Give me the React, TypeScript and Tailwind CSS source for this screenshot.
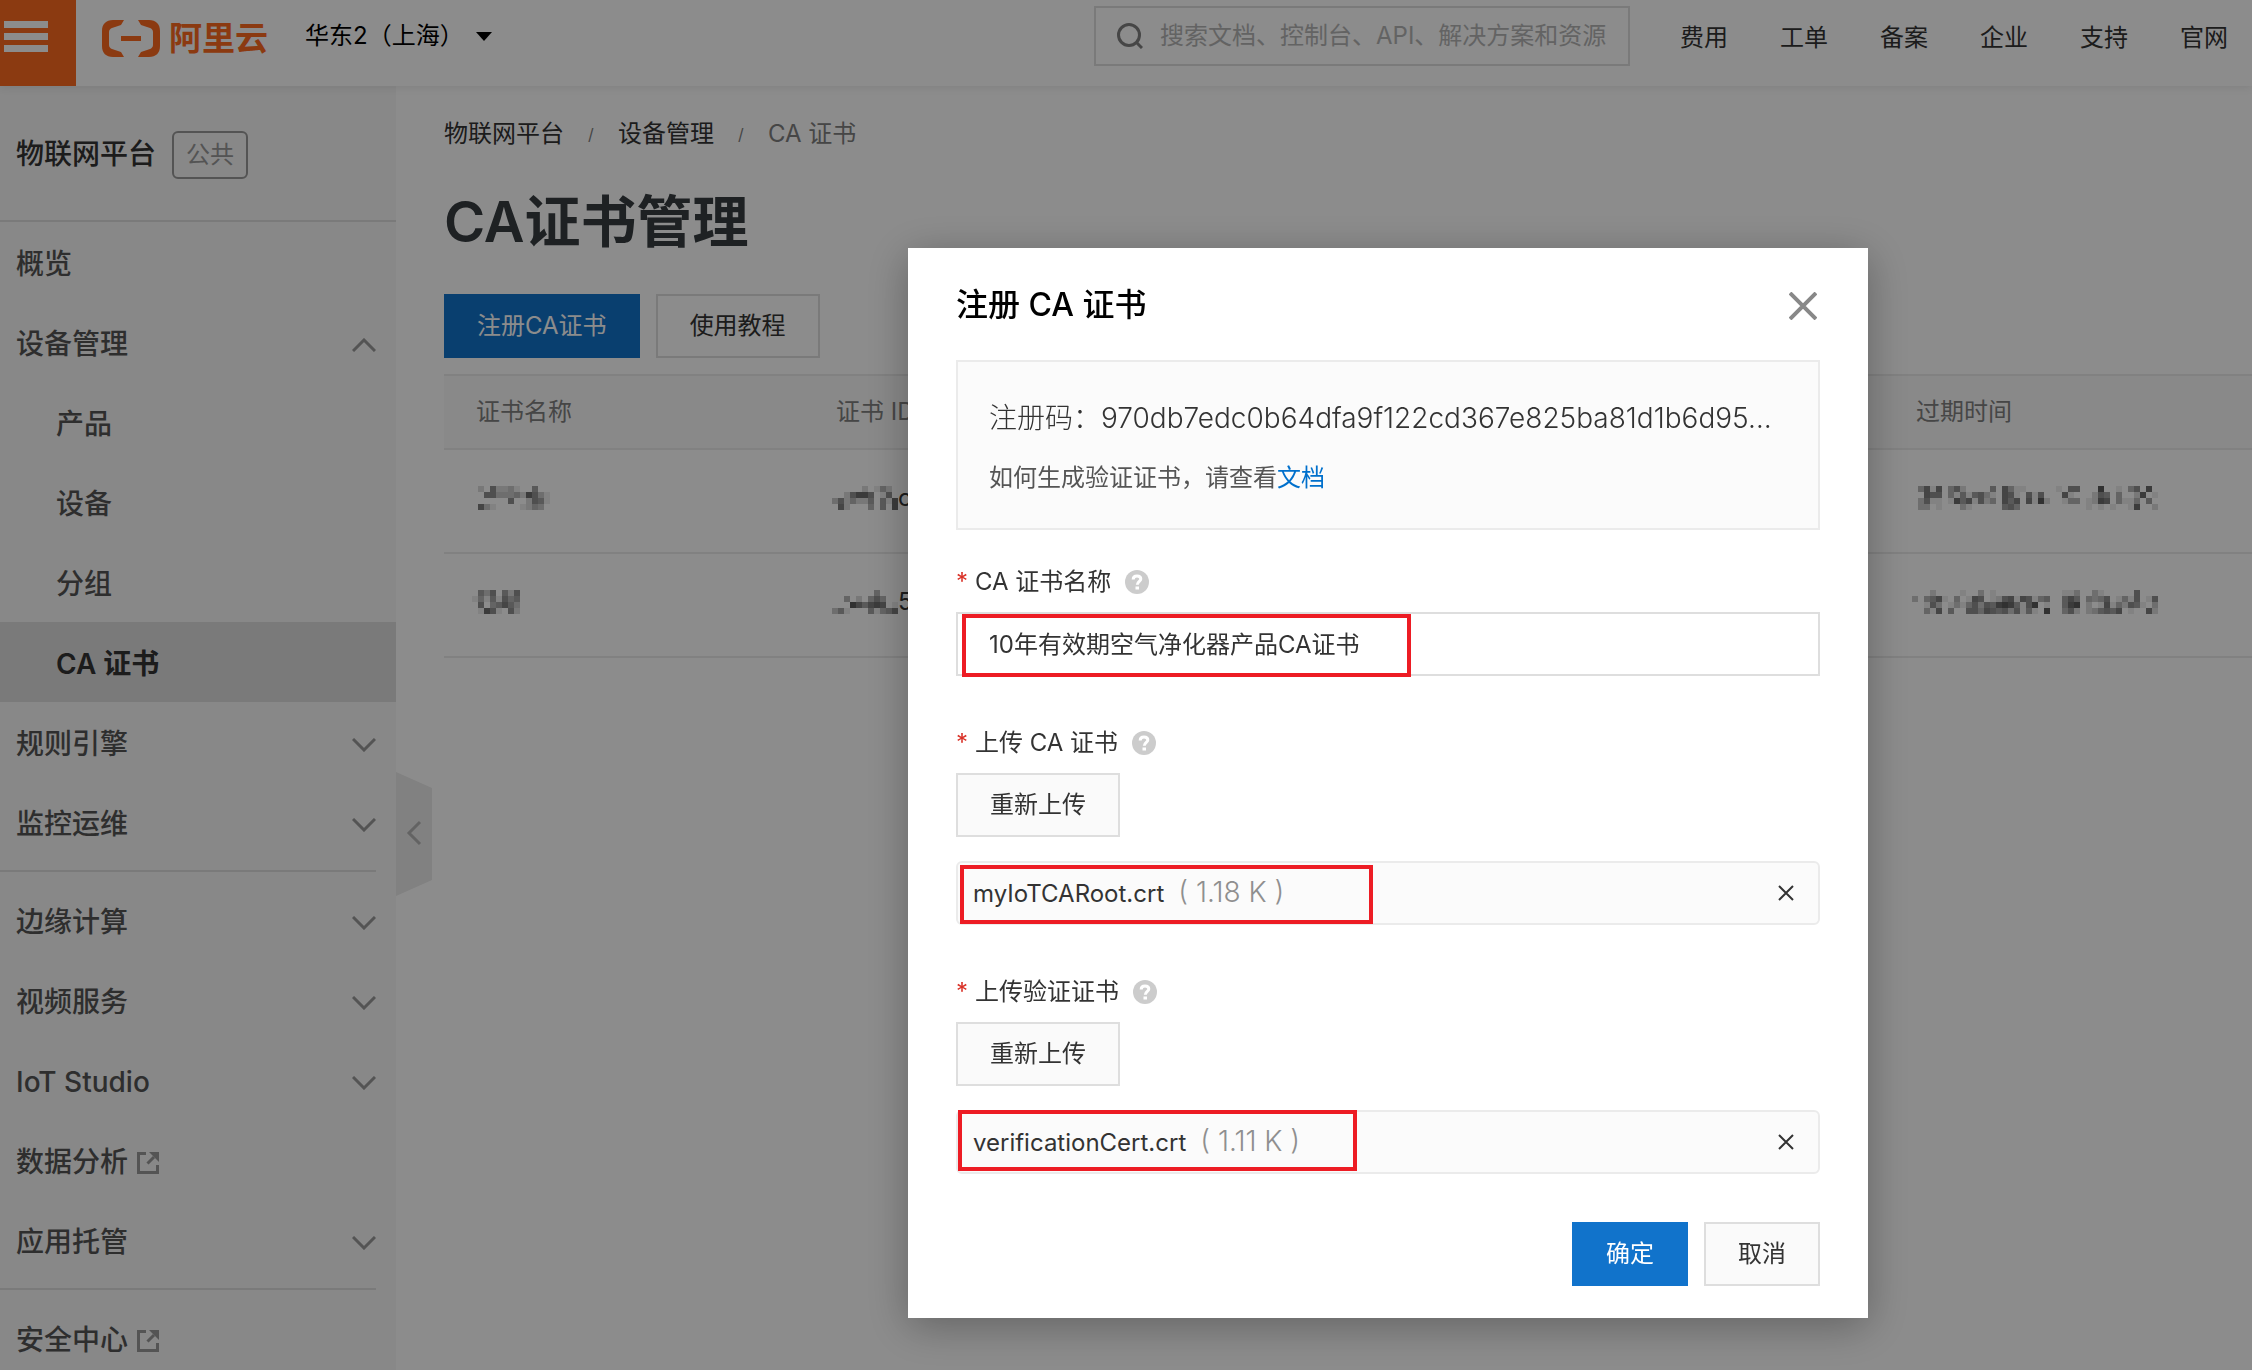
import { useState } from "react";

type NavItem = {
  label: string;
  icon?: "up" | "down" | "external";
  sub?: boolean;
  active?: boolean;
};

const navGroups: NavItem[][] = [
  [
    { label: "概览" },
    { label: "设备管理", icon: "up" },
    { label: "产品", sub: true },
    { label: "设备", sub: true },
    { label: "分组", sub: true },
    { label: "CA 证书", sub: true, active: true },
    { label: "规则引擎", icon: "down" },
    { label: "监控运维", icon: "down" },
  ],
  [
    { label: "边缘计算", icon: "down" },
    { label: "视频服务", icon: "down" },
    { label: "IoT Studio", icon: "down" },
    { label: "数据分析", icon: "external" },
    { label: "应用托管", icon: "down" },
  ],
  [{ label: "安全中心", icon: "external" }],
];

const topLinks = ["费用", "工单", "备案", "企业", "支持", "官网"];

// masked values, one digit per block: 0 is empty, 9 is darkest
const certs = [
  {
    name: ["0206223100500", "0066333428631", "0000006002651", "0731000012430"],
    id: ["00000201420", "00268860160", "36242250518", "07200040508"],
    idTail: "c",
    expires: [
      "04717046200005074110000010660009001046080",
      "00766041515631076106160007100026504002801",
      "03611018571624075707192001440128704114050",
      "03301000310000056400000000000101010018002",
    ],
  },
  {
    name: ["05360526", "14151645", "06045753", "01861062"],
    id: ["00000004000", "00402046400", "00097578701", "35100051457"],
    idTail: "5",
    expires: [
      "00020000100301000000000001130031000006000",
      "30457104017601267176145005750434601416016",
      "00163013146365898516901005890201714265103",
      "00417050066476563615109004620235657010072",
    ],
  },
];

function Mosaic({ rows }: { rows: string[] }) {
  return (
    <svg
      width={rows[0].length * 6}
      height={rows.length * 6}
      shapeRendering="crispEdges"
      aria-hidden="true"
    >
      {rows.map((row, y) =>
        row
          .split("")
          .map((d, x) =>
            d === "0" ? null : (
              <rect
                key={`${x}-${y}`}
                x={x * 6}
                y={y * 6}
                width="6"
                height="6"
                fillOpacity={Number(d) * 0.072}
              />
            ),
          ),
      )}
    </svg>
  );
}

function Chevron({ up }: { up?: boolean }) {
  return (
    <svg
      width="24"
      height="14"
      viewBox="0 0 24 14"
      fill="none"
      stroke="#999"
      strokeWidth="3"
    >
      <path d={up ? "M1 13L12 2L23 13" : "M1 1L12 12L23 1"} />
    </svg>
  );
}

function ExternalIcon() {
  return (
    <svg width="22" height="22" viewBox="0 0 22 22" fill="none" stroke="#999">
      <path d="M9 1.500H1.500V20.500H20.500V13" strokeWidth="3" />
      <path d="M10.500 11.500L17 5" strokeWidth="3" />
      <path d="M12 0H22V10L18.500 6.500L15.500 3.500Z" fill="#999" stroke="none" />
    </svg>
  );
}

function HelpIcon() {
  return (
    <svg width="24" height="24" viewBox="0 0 24 24" fill="none">
      <circle cx="12" cy="12" r="12" fill="#ccc" />
      <path
        d="M8.200 9.500C8.200 7.200 9.800 6 12 6S15.800 7.200 15.800 9C15.800 11.300 12.300 11.500 12.300 14.800"
        stroke="#fff"
        strokeWidth="3"
      />
      <rect x="10.500" y="16.500" width="3.500" height="3" fill="#fff" />
    </svg>
  );
}

function Cross({ size, width }: { size: number; width: number }) {
  return (
    <svg
      width={size}
      height={size}
      viewBox={`0 0 ${size} ${size}`}
      fill="none"
      stroke="currentColor"
      strokeWidth={width}
    >
      <path d={`M1 1L${size - 1} ${size - 1}M${size - 1} 1L1 ${size - 1}`} />
    </svg>
  );
}

function Logo() {
  return (
    <a href="#" className="flex items-center gap-[9px] text-[#fd6a20]">
      <svg width="58" height="37" viewBox="0 0 58 37" fill="currentColor">
        <path d="M22 0H11C4 0 0 4 0 11V26C0 33 4 37 11 37H22L19 32L10 29C8.500 28.500 7 27 7 25V12C7 10 8.500 8.500 10 8L19 5Z" />
        <path d="M36 0H47C54 0 58 4 58 11V26C58 33 54 37 47 37H36L39 32L48 29C49.500 28.500 51 27 51 25V12C51 10 49.500 8.500 48 8L39 5Z" />
        <rect x="19" y="16" width="20" height="5" />
      </svg>
      <span className="text-[33px] leading-[40px] font-bold">阿里云</span>
    </a>
  );
}

function FieldLabel({ text, htmlFor }: { text: string; htmlFor: string }) {
  return (
    <div className="mb-3 flex h-9 items-center">
      <label htmlFor={htmlFor} className="flex items-center">
        <span className="w-[19px] text-[#d93026]">*</span>
        {text}
      </label>
      <button type="button" aria-label="帮助" className="ml-[14px]">
        <HelpIcon />
      </button>
    </div>
  );
}

function UploadField({
  id,
  label,
  file,
  size,
  markClass,
}: {
  id: string;
  label: string;
  file: string;
  size: string;
  markClass: string;
}) {
  const [removed, setRemoved] = useState(false);

  return (
    <div className="mt-[49px]">
      <FieldLabel text={label} htmlFor={id} />
      <button
        id={id}
        type="button"
        onClick={() => setRemoved(false)}
        className="h-16 border-2 border-[#dedede] bg-[#fafafa] px-[32px]"
      >
        重新上传
      </button>

      {!removed && (
        <div className="relative mt-6 flex h-16 items-center rounded-md border-2 border-[#ebebeb] bg-[#fbfbfb] pr-6 pl-[15px]">
          <p className="flex items-baseline gap-[14px]">
            {file}
            <span className="text-[28px] font-light text-[#8f8f8f]">
              ( {size} )
            </span>
          </p>
          <button
            type="button"
            aria-label="删除"
            onClick={() => setRemoved(true)}
            className="ml-auto"
          >
            <Cross size={16} width={2} />
          </button>
          <span
            className={`pointer-events-none absolute border-4 border-[#ed1c24] ${markClass}`}
          />
        </div>
      )}
    </div>
  );
}

function TopBar() {
  return (
    <header className="relative z-10 flex h-[86px] shrink-0 items-start bg-white shadow-[0_2px_8px_rgba(0,0,0,0.08)]">
      <button
        type="button"
        aria-label="菜单"
        className="flex h-full w-[76px] flex-col gap-[5px] bg-[#fd6a20] pt-[21px] pl-1"
      >
        <span className="h-[7px] w-11 bg-white" />
        <span className="h-[7px] w-11 bg-white" />
        <span className="h-[7px] w-11 bg-white" />
      </button>

      <div className="ml-[26px] flex h-[76px] items-center">
        <Logo />
      </div>

      <button
        type="button"
        className="ml-[37px] flex h-[72px] items-center gap-3 text-black"
      >
        华东2（上海）
        <svg width="16" height="9" viewBox="0 0 16 9">
          <path d="M0 0H16L8 9Z" />
        </svg>
      </button>

      <label className="mt-[6px] ml-auto flex h-[60px] w-[536px] items-center gap-[17px] border-2 border-[#dedede] px-[21px]">
        <svg
          width="26"
          height="26"
          viewBox="0 0 26 26"
          fill="none"
          stroke="#808080"
          strokeWidth="3"
        >
          <circle cx="12" cy="12" r="10.500" />
          <path d="M19 19L25 25" />
        </svg>
        <input
          type="text"
          aria-label="搜索"
          placeholder="搜索文档、控制台、API、解决方案和资源"
          className="min-w-0 flex-1 placeholder:text-[#b5b5b5] focus:outline-none"
        />
      </label>

      <nav className="mr-6 ml-[50px] flex h-[76px] items-center gap-[52px]">
        {topLinks.map((link) => (
          <a key={link} href="#">
            {link}
          </a>
        ))}
      </nav>
    </header>
  );
}

function Sidebar() {
  return (
    <aside className="w-[396px] shrink-0 bg-[#f7f7f7] text-[28px] text-[#555]">
      <div className="flex h-[136px] items-center gap-4 border-b-2 border-[#dedede] pt-1 pl-4">
        <span className="font-medium text-[#333]">物联网平台</span>
        <span className="flex h-12 items-center rounded-md border-2 border-[#999] px-[12px] text-2xl text-[#999]">
          公共
        </span>
      </div>

      {navGroups.map((group, i) => (
        <nav key={i}>
          {i > 0 && <hr className="my-2 mr-5 border-t-2 border-[#dedede]" />}
          {group.map((item) => (
            <a
              key={item.label}
              href="#"
              className={`flex h-20 items-center pt-[6px] pr-5 ${
                item.sub ? "pl-14" : "pl-4"
              } ${
                item.active
                  ? "bg-[#dedede] font-semibold text-[#333]"
                  : "font-medium"
              }`}
            >
              {item.label}
              {item.icon === "external" && (
                <span className="ml-[9px]">
                  <ExternalIcon />
                </span>
              )}
              {(item.icon === "up" || item.icon === "down") && (
                <span className="ml-auto">
                  <Chevron up={item.icon === "up"} />
                </span>
              )}
            </a>
          ))}
        </nav>
      ))}
    </aside>
  );
}

function CertTable() {
  return (
    <table className="mt-4 w-full table-fixed border-collapse text-left">
      <thead>
        <tr className="h-[74px] border-y-2 border-[#ebebeb] bg-[#fafafa] text-[#808080]">
          <th className="w-[360px] px-8 font-normal">证书名称</th>
          <th className="w-[1080px] px-8 font-normal">证书 ID</th>
          <th className="px-8 font-normal">过期时间</th>
        </tr>
      </thead>
      <tbody>
        {certs.map((cert) => (
          <tr key={cert.idTail} className="h-[104px] border-b-2 border-[#ebebeb]">
            <td className="px-7 pb-[6px]">
              <Mosaic rows={cert.name} />
            </td>
            <td className="px-7 pb-[6px]">
              <div className="flex items-center">
                <Mosaic rows={cert.id} />
                {cert.idTail}
              </div>
            </td>
            <td className="px-7 pb-[6px]">
              <Mosaic rows={cert.expires} />
            </td>
          </tr>
        ))}
      </tbody>
    </table>
  );
}

function RegisterDialog({ onClose }: { onClose: () => void }) {
  const [name, setName] = useState("10年有效期空气净化器产品CA证书");

  return (
    <div className="fixed inset-0 z-20 flex items-start justify-end bg-black/45 pt-62 pr-96">
      <div
        role="dialog"
        aria-labelledby="dialog-title"
        className="w-[960px] bg-white px-12 pb-8 shadow-[0_8px_40px_rgba(0,0,0,0.3)]"
      >
        <div className="flex h-28 items-center justify-between pt-[3px] pr-[3px]">
          <h2 id="dialog-title" className="text-[32px] font-medium text-black">
            注册 CA 证书
          </h2>
          <button
            type="button"
            aria-label="关闭"
            onClick={onClose}
            className="text-[#888]"
          >
            <Cross size={28} width={4} />
          </button>
        </div>

        {/* registration code */}
        <div className="flex h-[170px] flex-col justify-center gap-4 border-2 border-[#ebebeb] bg-[#fbfbfb] px-[31px] pt-[6px]">
          <p className="truncate text-[28px] leading-[44px] font-light">
            注册码：970db7edc0b64dfa9f122cd367e825ba81d1b6d95…
          </p>
          <p className="leading-[44px] text-[#555]">
            如何生成验证证书，请查看
            <a href="#" className="text-[#0070cc]">
              文档
            </a>
          </p>
        </div>

        <div className="mt-[34px]">
          <FieldLabel text="CA 证书名称" htmlFor="cert-name" />
          <div className="relative">
            <input
              id="cert-name"
              type="text"
              value={name}
              onChange={(e) => setName(e.target.value)}
              className="h-16 w-full border-2 border-[#dedede] bg-white px-[31px] pb-1 focus:outline-none"
            />
            <span className="pointer-events-none absolute top-[2px] left-[6px] h-[63px] w-[449px] border-4 border-[#ed1c24]" />
          </div>
        </div>

        <UploadField
          id="upload-ca"
          label="上传 CA 证书"
          file="myIoTCARoot.crt"
          size="1.18 K"
          markClass="left-[2px] top-[2px] h-[59px] w-[413px]"
        />
        <UploadField
          id="upload-verify"
          label="上传验证证书"
          file="verificationCert.crt"
          size="1.11 K"
          markClass="left-0 -top-[2px] h-[61px] w-[399px]"
        />

        <div className="mt-12 flex justify-end gap-4">
          <button
            type="button"
            onClick={onClose}
            className="h-16 w-[116px] bg-[#1173cb] text-white"
          >
            确定
          </button>
          <button
            type="button"
            onClick={onClose}
            className="h-16 w-[116px] border-2 border-[#dedede] bg-[#fafafa]"
          >
            取消
          </button>
        </div>
      </div>
    </div>
  );
}

export default function App() {
  const [open, setOpen] = useState(true);

  return (
    <div className="flex h-screen flex-col overflow-hidden bg-white font-['Inter','Noto_Sans_CJK_SC',sans-serif] text-2xl text-[#333]">
      <TopBar />

      <div className="flex min-h-0 flex-1">
        <Sidebar />

        <main className="relative min-w-0 flex-1 pl-12">
          {/* collapse handle, hangs over the content */}
          <button
            type="button"
            aria-label="收起"
            className="absolute top-[686px] left-0"
          >
            <svg width="36" height="124" viewBox="0 0 36 124" fill="none">
              <path d="M0 0L36 16V108L0 124Z" fill="#ebebeb" />
              <path d="M24 50L13 61L24 72" stroke="#b5b5b5" strokeWidth="3" />
            </svg>
          </button>

          <div className="flex h-24 items-center">
            <a href="#">物联网平台</a>
            <span className="w-[54px] text-center text-base text-[#808080]">/</span>
            <a href="#">设备管理</a>
            <span className="w-[54px] text-center text-base text-[#808080]">/</span>
            <span className="text-[#808080]">CA 证书</span>
          </div>

          <h1 className="text-[56px] leading-[80px] font-semibold text-[#373d41]">
            CA证书管理
          </h1>

          <div className="mt-8 flex gap-4">
            <button
              type="button"
              onClick={() => setOpen(true)}
              className="h-16 bg-[#1173cb] px-[33px] text-white"
            >
              注册CA证书
            </button>
            <button
              type="button"
              className="h-16 border-2 border-[#dedede] px-[32px]"
            >
              使用教程
            </button>
          </div>

          <CertTable />
        </main>
      </div>

      {open && <RegisterDialog onClose={() => setOpen(false)} />}
    </div>
  );
}
